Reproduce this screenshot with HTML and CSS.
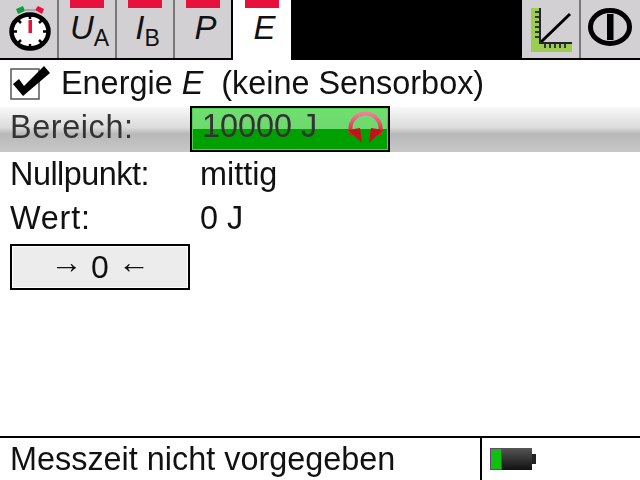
FILE: index.html
```html
<!DOCTYPE html>
<html lang="de">

<head>
    <meta charset="UTF-8">
    <meta name="viewport" content="width=device-width, initial-scale=1.0">
    <title>Energie</title>
    <link rel="stylesheet" href="styles.css">
</head>

<body>
    <div class="screen">
        <div class="tabbar">
            <div class="tab tab-icon">
                <svg width="58" height="58" viewBox="0 0 58 58">
                    <path d="M16 9 L23 6 L25 11 L18 14 Z" fill="#0aa040"/>
                    <path d="M44 9 L38 6 L35 10 L42 14 Z" fill="#e8103c"/>
                    <path d="M24 10 H36" stroke="#999" stroke-width="1.5"/>
                    <ellipse cx="30" cy="31.5" rx="18.5" ry="17" fill="#fff" stroke="#000" stroke-width="4.5"/>
                    <path d="M30 15v4M30 44v4M13 31.5h4M43 31.5h4M18 20l3 3M42 20l-3 3M18 43l3-3M42 43l-3-3" stroke="#000" stroke-width="2.5"/>
                    <rect x="28.5" y="20" width="3.5" height="13" fill="#e8103c"/>
                </svg>
            </div>
            <div class="tab channel"><span class="marker"></span><span class="sym"><i>U</i><sub>A</sub></span></div>
            <div class="tab channel"><span class="marker"></span><span class="sym"><i>I</i><sub>B</sub></span></div>
            <div class="tab channel before-active"><span class="marker"></span><span class="sym"><i>P</i></span></div>
            <div class="tab channel active"><span class="marker"></span><span class="sym"><i>E</i></span></div>
            <div class="tab-gap"></div>
            <div class="tab tab-icon">
                <svg width="57" height="58" viewBox="0 0 57 58">
                    <path d="M9 8h9v35h32v9H9z" fill="#9ccc50"/>
                    <path d="M18 12h-5M18 17h-5M18 22h-5M18 27h-5M18 32h-5M18 37h-5M23 48v-5M28 48v-5M33 48v-5M38 48v-5M43 48v-5" stroke="#334" stroke-width="2"/>
                    <path d="M19 42 L48 14" stroke="#000" stroke-width="3" fill="none"/>
                    <path d="M18 8V43H50" stroke="#223" stroke-width="2" fill="none"/>
                </svg>
            </div>
            <div class="tab tab-icon tab-last">
                <svg width="59" height="58" viewBox="0 0 59 58">
                    <ellipse cx="29" cy="27" rx="19.5" ry="16.5" fill="none" stroke="#000" stroke-width="5"/>
                    <rect x="26" y="14" width="6.5" height="26" fill="#000"/>
                </svg>
            </div>
        </div>

        <div class="content">
            <div class="title-row">
                <svg class="check" width="42" height="38" viewBox="0 0 42 38">
                    <rect x="1" y="4" width="28" height="30" fill="#fff" stroke="#555" stroke-width="1.5"/>
                    <path d="M3 19 L9 14 L14 21 L34 1 L40 8 L13 31 Z" fill="#000"/>
                </svg>
                <span>Energie <i>E</i> &nbsp;(keine Sensorbox)</span>
            </div>

            <div class="row row-selected">
                <span class="label label-range">Bereich:</span>
                <div class="range">
                    <span class="range-value">10000 J</span>
                    <svg width="38" height="36" viewBox="0 0 38 36">
                        <defs>
                            <linearGradient id="ringFade" x1="0" y1="0" x2="0" y2="1">
                                <stop offset="0" stop-color="#f08098"/>
                                <stop offset="1" stop-color="#d02030"/>
                            </linearGradient>
                        </defs>
                        <path d="M5 24 A15 15 0 1 1 32 24" fill="none" stroke="url(#ringFade)" stroke-width="4"/>
                        <path d="M1 19 L13 17 L15 32 Z" fill="#c8101c"/>
                        <path d="M36 19 L24 17 L22 32 Z" fill="#c8101c"/>
                    </svg>
                </div>
            </div>

            <div class="row">
                <span class="label label-zero">Nullpunkt:</span>
                <span>mittig</span>
            </div>
            <div class="row">
                <span class="label label-value">Wert:</span>
                <span>0 J</span>
            </div>

            <button class="zero-btn"><span class="arrow">→</span> 0 <span class="arrow">←</span></button>
        </div>

        <div class="statusbar">
            <div class="status-text">Messzeit nicht vorgegeben</div>
            <div class="status-battery">
                <div class="battery">
                    <div class="battery-level"></div>
                </div>
                <div class="battery-tip"></div>
            </div>
        </div>
    </div>
</body>

</html>
```

FILE: styles.css
```css
html, body {
    margin: 0;
    padding: 0;
}

body {
    width: 640px;
    height: 480px;
    overflow: hidden;
    background-color: #fff;
    color: #111;
    font-family: "Liberation Sans", Arial, sans-serif;
    font-size: 32.4px;
}

.screen {
    display: flex;
    flex-direction: column;
    height: 480px;
    filter: blur(0.5px);
}

.tabbar {
    display: flex;
    height: 58px;
    flex: none;
    border-bottom: 2px solid #000;
    background-color: #000;
}

.tab {
    width: 57px;
    border-right: 2px solid #777;
    background-color: #d3d0d3;
    flex: none;
    display: flex;
    flex-direction: column;
    align-items: center;
}

.tab-icon {
    justify-content: center;
}

.tab-last {
    border-right: none;
    width: 59px;
}

.channel {
    width: 56px;
}

.before-active {
    border-right-color: #000;
}

.marker {
    width: 34px;
    height: 8px;
    background-color: #e8103c;
    flex: none;
}

.sym {
    font-size: 33px;
    line-height: 40px;
    padding-left: 5px;
    white-space: nowrap;
}

.sym sub {
    font-size: 23px;
    line-height: 0;
    vertical-align: -7px;
}

.active {
    background-color: #fff;
    border-right: none;
    width: 58px;
    margin-bottom: -2px;
}

.tab-gap {
    flex: 1;
    background-color: #000;
}

.content {
    flex: 1;
}

.title-row {
    display: flex;
    align-items: center;
    gap: 9px;
    height: 47px;
    padding-left: 10px;
}

.check {
    flex: none;
}

.row {
    display: flex;
    align-items: center;
    height: 44px;
    padding-left: 10px;
}

.label {
    width: 190px;
    flex: none;
}

.label-range {
    letter-spacing: 0.6px;
    margin-bottom: 5px;
}

.label-zero {
    letter-spacing: -0.5px;
}

.label-value {
    letter-spacing: 0.8px;
}

.row-selected {
    height: 45px;
    background: linear-gradient(#f8f8f8, #dcdcdc 45%, #b8b8b8 60%, #c8c8c8);
    color: #333;
}

.range {
    width: 200px;
    height: 46px;
    margin-left: -10px;
    margin-top: -1px;
    padding: 0 3px 0 10px;
    box-sizing: border-box;
    border: 2px solid #000;
    background: linear-gradient(#6fe06f, #6fd86f 49%, #00a000 49%, #00a000);
    box-shadow: inset 0 0 0 1px #50d050;
    display: flex;
    align-items: center;
    justify-content: space-between;
    color: #333;
}

.range-value {
    margin-bottom: 5px;
}

.zero-btn {
    display: block;
    width: 180px;
    height: 46px;
    margin: 4px 0 0 10px;
    padding: 0;
    border: 2px solid #000;
    outline: 1px solid #fff;
    outline-offset: -3px;
    background-color: #ececec;
    color: #111;
    font-family: inherit;
    font-size: 32px;
}

.arrow {
    position: relative;
    top: -5px;
}

.statusbar {
    display: flex;
    flex: none;
    height: 42px;
    border-top: 2px solid #000;
}

.status-text {
    width: 470px;
    padding-left: 10px;
    line-height: 42px;
    border-right: 2px solid #000;
}

.status-battery {
    display: flex;
    align-items: center;
    padding-left: 8px;
}

.battery {
    width: 42px;
    height: 22px;
    background: linear-gradient(#555, #111);
}

.battery-level {
    width: 10px;
    height: 20px;
    border: 1px solid #704070;
    background-color: #10c010;
}

.battery-tip {
    width: 4px;
    height: 10px;
    background-color: #222;
}
```
